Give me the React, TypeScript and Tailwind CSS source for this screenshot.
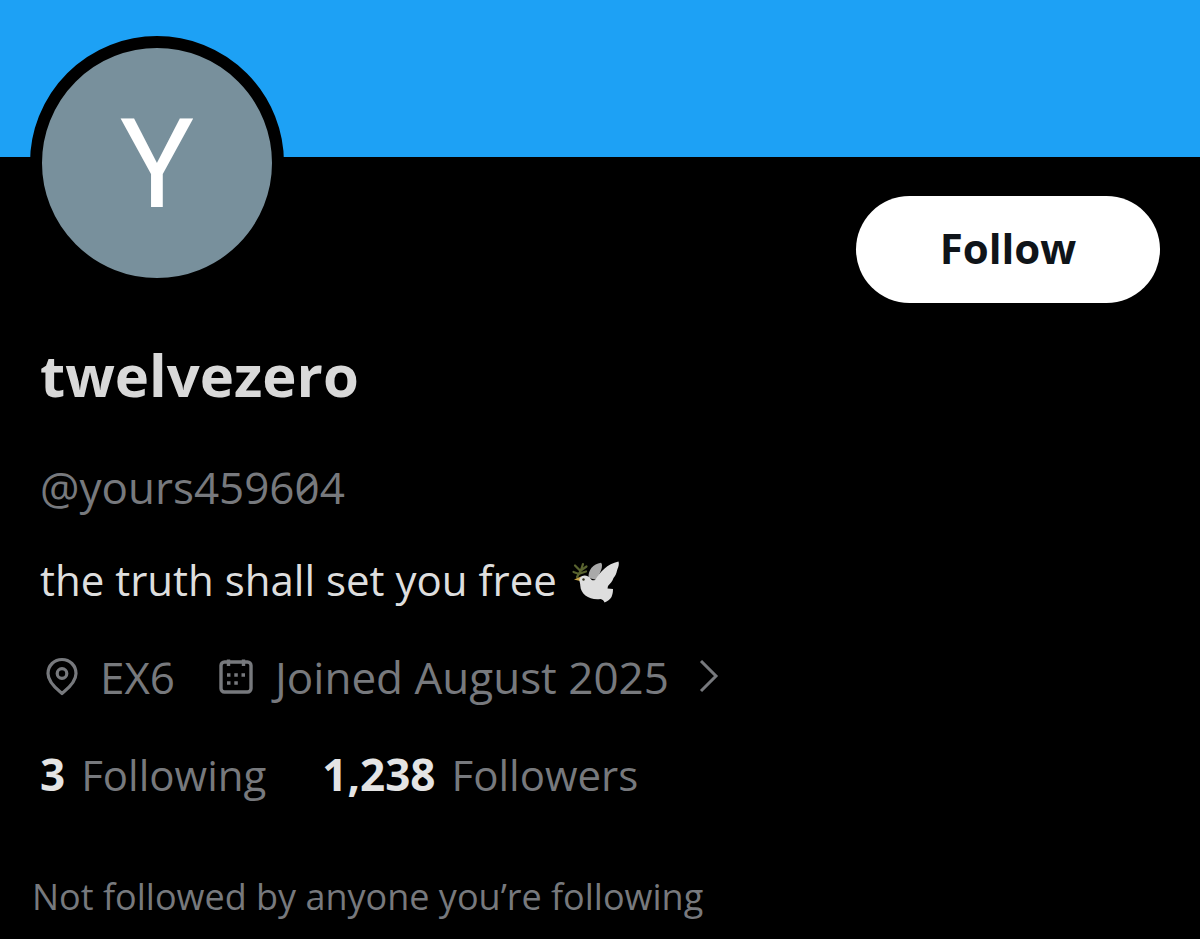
import type { ReactNode } from "react";

function LocationIcon() {
  return (
    <svg viewBox="0 0 32 40" className="h-10 w-8 shrink-0" fill="none" stroke="currentColor" strokeWidth="3.2" aria-hidden="true">
      <path d="M16 36.500C12 33 2 26 2 16.500C2 8.500 8.200 2.500 16 2.500s14 6 14 14C30 26 20 33 16 36.500Z" strokeLinejoin="round" />
      <circle cx="16" cy="16.500" r="4.800" />
    </svg>
  );
}

function CalendarIcon() {
  return (
    <svg viewBox="0 0 34 38" className="h-[38px] w-[34px] shrink-0" fill="none" stroke="currentColor" strokeWidth="3.4" aria-hidden="true">
      <rect x="2" y="4" width="30" height="30" rx="3.500" />
      <path d="M9.500 1.500v6.500M24.500 1.500v6.500" />
      <path d="M8 17h3.500M15.300 17h3.500M22.500 17h3.500M8 25h3.500M15.300 25h3.500" strokeWidth="3.500" />
    </svg>
  );
}

function ChevronIcon() {
  return (
    <svg viewBox="0 0 20 34" className="h-[34px] w-5 shrink-0" fill="none" stroke="currentColor" strokeWidth="3" aria-hidden="true">
      <path d="M2 1l15 15L2 31" />
    </svg>
  );
}

function Dove() {
  return (
    <svg viewBox="0 0 48 42" className="mt-1 h-[42px] w-12 shrink-0" role="img" aria-label="Dove of peace">
      <path d="M17.500 17C17 9 22 3 30 1.800c1.500 1.500 1 4 .5 6.200L26 19Z" fill="#a9a9a9" />
      <path d="M6 16c3-4 5-8 6-13M8 13L2.500 11M9.500 10L4 4.500M10.500 9l5-3.500M9 12.500l6-2" stroke="#59632f" strokeWidth="2.200" strokeLinecap="round" fill="none" />
      <path d="M3 18.500l7-3 1 5Z" fill="#c9a548" />
      <path d="M8.500 18C10 13.500 16.500 13.500 19 17c1.500 2.500 3.500 3 5.500 1.500C29 11 36 3 47.500.5c1 3.500-.5 6-1.500 9-.5 3-1.500 5-3.500 7.500-1 3-3 5.500-5.500 8l-.5 2.500 5.500.5c0 3-.5 5.500-1.500 8-1.500 2.500-4 4.500-7 5.500-.5-2-2-3-4-3.500C19 39.500 9.500 33.500 9.300 24.500 9.300 22 8 20 8.500 18Z" fill="#dedede" />
      <circle cx="12.500" cy="18.500" r="1.200" fill="#33331f" />
    </svg>
  );
}

function Stat({ value, label }: { value: string; label: ReactNode }) {
  return (
    <a href="#" className="flex items-baseline gap-4">
      <span className="font-bold text-[#e4e4e4]">{value}</span>
      <span className="text-[42px]">{label}</span>
    </a>
  );
}

export default function App() {
  return (
    <main className="min-h-screen bg-black font-['Open_Sans',sans-serif] text-[44px] leading-[60px] text-[#77797d]">
      <div className="h-[157px] bg-[#1da1f5]" />
      <section className="px-10 pb-3">
        <div className="flex items-start justify-between">
          <div className="-mt-[121px] -ml-[10px] flex size-[254px] items-center justify-center rounded-full border-12 border-black bg-[#78909c] pt-1 font-['Roboto',sans-serif] text-[124px] text-white">
            Y
          </div>
          <button type="button" className="mt-[39px] h-[107px] w-[304px] rounded-full bg-white pb-1 text-[42px] font-bold text-[#0f1419]">
            Follow
          </button>
        </div>
        <h1 className="mt-8 text-[58px] leading-[80px] font-bold text-[#d9d9d9]">twelvezero</h1>
        <p className="mt-[42px] slashed-zero">@yours459604</p>
        <p className="mt-[33px] flex items-center gap-[14px] text-[42px] text-[#dedede]">
          the truth shall set you free
          <Dove />
        </p>
        <div className="mt-[37px] flex items-center">
          <span className="ml-[6px] flex items-center gap-[22px]">
            <LocationIcon />
            EX6
          </span>
          <a href="#" className="ml-11 flex items-center">
            <CalendarIcon />
            <span className="mr-[30px] ml-[22px]">Joined August 2025</span>
            <ChevronIcon />
          </a>
        </div>
        <div className="mt-[37px] flex gap-14">
          <Stat value="3" label="Following" />
          <Stat value="1,238" label="Followers" />
        </div>
        <p className="mt-[62px] -ml-2 text-[36px]">Not followed by anyone you’re following</p>
      </section>
    </main>
  );
}
